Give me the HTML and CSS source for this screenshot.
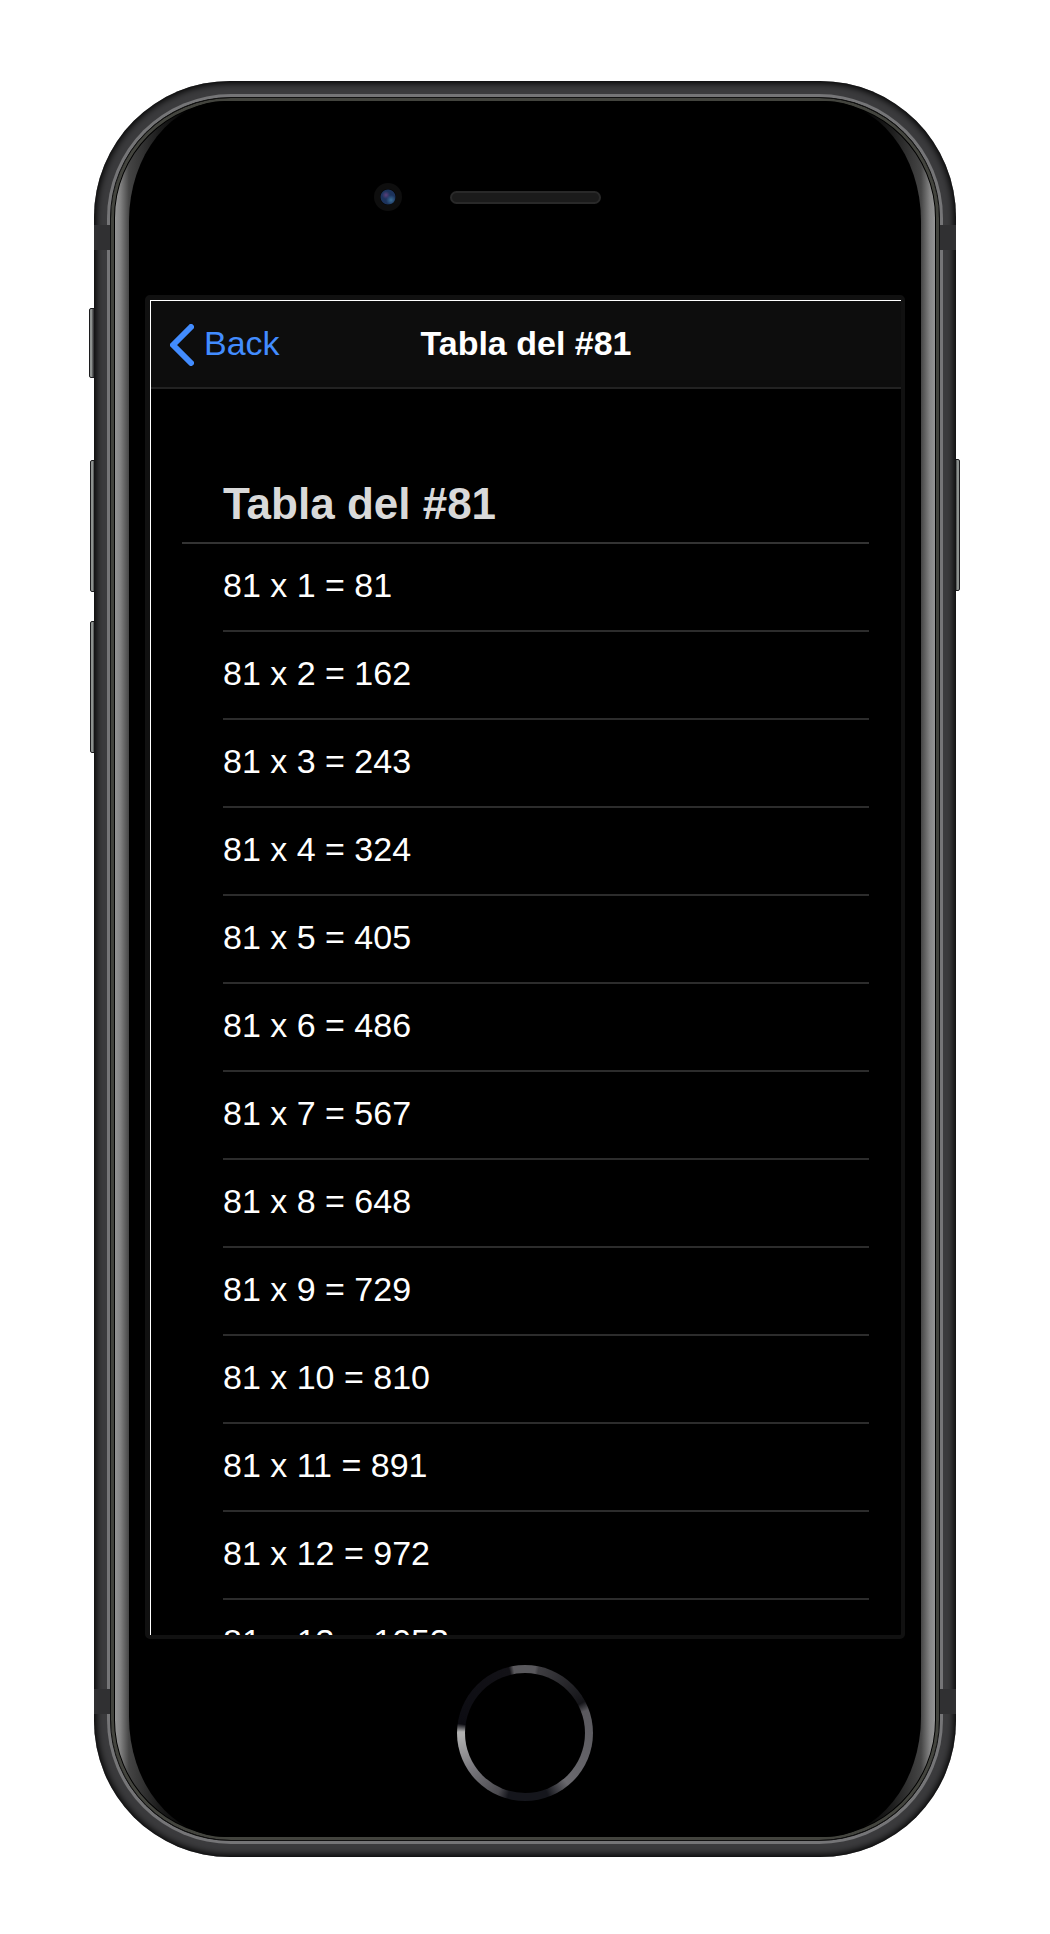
FILE: index.html
```html
<!DOCTYPE html>
<html lang="es">
<head>
  <meta charset="utf-8">
  <meta name="viewport" content="width=device-width, initial-scale=1">
  <title>Tabla del #81</title>
  <link rel="stylesheet" href="styles.css">
</head>
<body>
  <div class="phone">
    <span class="key key-mute"></span>
    <span class="key key-up"></span>
    <span class="key key-down"></span>
    <span class="key key-power"></span>
    <div class="shell">
      <div class="rim">
        <div class="edge">
          <div class="glass">
            <div class="sensors">
              <span class="camera"></span>
              <span class="speaker"></span>
            </div>
            <main class="screen">
              <header class="toolbar">
                <button class="back" type="button">
                  <svg class="chevron" viewBox="0 0 24 42" aria-hidden="true"><path d="M21 3 3 21 21 39"/></svg>
                  Back
                </button>
                <h1 class="title">Tabla del #81</h1>
              </header>
              <section class="content">
                <h2 class="list-header">Tabla del #81</h2>
                <ul class="list">
                  <li>81 x 1 = 81</li>
                  <li>81 x 2 = 162</li>
                  <li>81 x 3 = 243</li>
                  <li>81 x 4 = 324</li>
                  <li>81 x 5 = 405</li>
                  <li>81 x 6 = 486</li>
                  <li>81 x 7 = 567</li>
                  <li>81 x 8 = 648</li>
                  <li>81 x 9 = 729</li>
                  <li>81 x 10 = 810</li>
                  <li>81 x 11 = 891</li>
                  <li>81 x 12 = 972</li>
                  <li>81 x 13 = 1053</li>
                </ul>
              </section>
            </main>
            <button class="home" type="button" aria-label="Home"></button>
          </div>
        </div>
      </div>
      <span class="band band-top"></span>
      <span class="band band-bottom"></span>
    </div>
  </div>
</body>
</html>
```

FILE: styles.css
```css
* {
  box-sizing: border-box;
}

body {
  margin: 0;
  padding: 81px 94px 77px;
  background: #fff;
  color: #fff;
  font-family: "Liberation Sans", Arial, sans-serif;
}

.phone {
  position: relative;
}

/* Metal body: dark outer band, bright lip, thin rubber gasket */
.shell {
  position: relative;
  padding: 13px;
  border-radius: 136px;
  background: #3b3b3d;
  box-shadow: inset 0 0 7px 2px #000;
}

.rim {
  padding: 3px;
  border-radius: 124px;
  background: #757577;
}

.edge {
  padding: 3px 18px;
  border: 1px solid #111;
  border-radius: 121px;
  background:
    linear-gradient(90deg, #949494 4px, #858585 9px, #454545 18px, #1c1c1c 48px, #000 80px) left / 50% 100% no-repeat,
    linear-gradient(270deg, #949494 4px, #858585 9px, #454545 18px, #1c1c1c 48px, #000 80px) right / 50% 100% no-repeat,
    #000;
  box-shadow: inset 0 0 0 3px #43443e, inset 0 0 0 4px #000;
}

.glass {
  display: flex;
  flex-direction: column;
  padding: 82px 16px 36px;
  border-radius: 96px / 120px;
  background: #000;
}

.band {
  position: absolute;
  left: 0;
  right: 0;
  height: 25px;
  border: solid #303032;
  border-width: 0 16px;
}

.band-top {
  top: 144px;
}

.band-bottom {
  bottom: 143px;
}

/* Side keys */
.key {
  position: absolute;
  left: -4px;
  width: 8px;
  height: 132px;
  border: 1px solid #1c1c1e;
  border-radius: 2px;
  background: linear-gradient(90deg, #8d918f 2px, #303032 3px, #59595b 5px);
}

.key-mute {
  top: 227px;
  left: -5px;
  height: 70px;
}

.key-up {
  top: 379px;
}

.key-down {
  top: 540px;
}

.key-power {
  top: 378px;
  left: auto;
  right: -4px;
  transform: scaleX(-1);
}

/* Camera and earpiece */
.sensors {
  display: grid;
  grid-template-columns: 1fr auto 1fr;
  align-items: center;
  column-gap: 48px;
  margin-bottom: 84px;
}

.camera {
  justify-self: end;
  width: 28px;
  height: 28px;
  border: 6px solid #0e0e0e;
  border-radius: 50%;
  background:
    radial-gradient(circle at 6px 6px, #5b3f7a, transparent 4px),
    radial-gradient(circle at 11px 11px, #3a6e98, transparent 5px),
    radial-gradient(circle, #1c335c 7px, #050505 8px);
}

.speaker {
  width: 151px;
  height: 13px;
  border: 2px solid #292929;
  border-radius: 7px;
  background: #1b1b1b;
}

/* App screen */
.screen {
  aspect-ratio: 760 / 1344;
  overflow: hidden;
  border: solid #111;
  border-width: 5px 4px 4px 5px;
  border-radius: 5px;
  background: #000;
  box-shadow: inset 1px 1px 0 #fff;
}

.toolbar {
  display: grid;
  grid-template-columns: 1fr auto 1fr;
  align-items: center;
  height: 88px;
  margin: 1px 0 0 1px;
  padding-bottom: 2px;
  border-bottom: 2px solid #222;
  background: #0d0d0d;
}

.back {
  display: flex;
  align-items: center;
  justify-self: start;
  gap: 10px;
  padding: 0 0 0 19px;
  border: 0;
  background: none;
  color: #428cff;
  font: inherit;
  font-size: 34px;
  line-height: 40px;
}

.chevron {
  width: 24px;
  height: 42px;
  margin-top: 4px;
  fill: none;
  stroke: currentColor;
  stroke-width: 6;
  stroke-linecap: round;
  stroke-linejoin: round;
}

.title {
  margin: 0;
  font-size: 34px;
  line-height: 40px;
}

.content {
  padding: 77px 32px 0;
}

.list-header {
  margin: 0;
  padding: 14px 0 14px 41px;
  border-bottom: 2px solid #333;
  color: #d9d9d9;
  font-size: 44px;
  line-height: 48px;
}

.list {
  margin: 0;
  padding: 0 0 0 41px;
  list-style: none;
}

.list li {
  padding: 21px 0 25px;
  border-bottom: 2px solid #2c2c2c;
  font-size: 34px;
  line-height: 40px;
}

/* Home key with its reflective ring */
.home {
  align-self: center;
  width: 136px;
  height: 136px;
  margin-top: 26px;
  padding: 0;
  border: 8px solid transparent;
  border-radius: 50%;
  background:
    linear-gradient(#000, #000) padding-box,
    conic-gradient(#59585c 9deg, #3f3e42 12deg, #141418 62deg, #5a595e 70deg, #626166 110deg, #6a696e 140deg, #15161c 160deg, #15161c 195deg, #4a494e 204deg, #77767b 235deg, #b0b0b0 268deg, #b0b0b0 271deg, #0c0c12 278deg, #131217 346deg, #59585c 350deg) border-box;
}
```
